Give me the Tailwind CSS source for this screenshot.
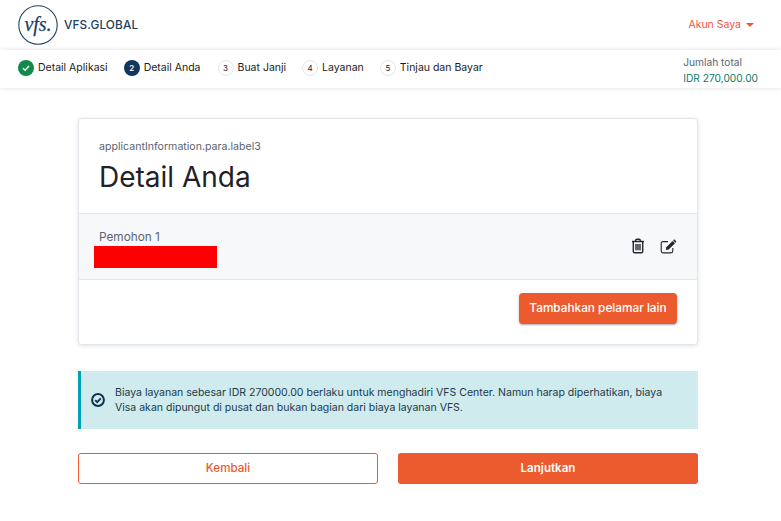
<!DOCTYPE html>
<html lang="en">
<head>
    <meta charset="UTF-8">
    <meta name="viewport" content="width=device-width, initial-scale=1.0">
    <title>VFS Global - Detail Anda</title>
    <script src="https://cdn.jsdelivr.net/npm/@tailwindcss/browser@4"></script>
</head>
<body class="bg-white font-['Inter',sans-serif] text-[#1c1c1e] w-[781px] h-[521px] overflow-hidden">
    <!-- Header -->
    <header class="h-[50px] flex items-center justify-between pl-[18px] pr-[27px] bg-white">
        <div class="flex items-center gap-[6px]">
            <svg width="40" height="40" viewBox="0 0 40 40" fill="none">
                <circle cx="20" cy="20" r="19.2" stroke="#1c3f60" stroke-width="1.1"/>
                <text x="20" y="26" text-anchor="middle" font-family="Liberation Serif" font-style="italic" font-size="20" fill="#1c3f60" stroke="#1c3f60" stroke-width="0.25">vfs.</text>
            </svg>
            <span class="text-[11.8px] font-medium tracking-[0.12px] mt-[1px] text-[#1c3f60]">VFS.GLOBAL</span>
        </div>
        <div class="flex items-center gap-[5px] text-[10.5px] text-[#f0523d]">
            <span>Akun Saya</span>
            <span class="w-0 h-0 border-x-[4px] border-x-transparent border-t-[4px] border-t-[#ec5b2e]"></span>
        </div>
    </header>

    <!-- Stepper -->
    <div class="h-[38px] flex items-center justify-between pl-[18px] pr-[23px] bg-white shadow-[0_0_5px_rgba(0,0,0,0.13)]">
        <div class="flex items-center text-[10.5px] -mt-[3px]">
            <div class="flex items-center gap-[4px] mr-[16px]">
                <span class="w-4 h-4 rounded-full bg-[#0f8a4b] flex items-center justify-center">
                    <svg width="10" height="10" viewBox="0 0 10 10" fill="none"><path d="M2 5.2l2.1 2L8 3" stroke="#fff" stroke-width="1.5"/></svg>
                </span>
                <span>Detail Aplikasi</span>
            </div>
            <div class="flex items-center gap-[4px] mr-[17px]">
                <span class="w-4 h-4 rounded-full bg-[#12355b] text-white text-[8px] font-semibold flex items-center justify-center">2</span>
                <span>Detail Anda</span>
            </div>
            <div class="flex items-center gap-[4px] mr-[16px]">
                <span class="w-4 h-4 rounded-full border border-[#e4e6ea] text-[8px] flex items-center justify-center">3</span>
                <span>Buat Janji</span>
            </div>
            <div class="flex items-center gap-[4px] mr-[16px]">
                <span class="w-4 h-4 rounded-full border border-[#e4e6ea] text-[8px] flex items-center justify-center">4</span>
                <span>Layanan</span>
            </div>
            <div class="flex items-center gap-[4px]">
                <span class="w-4 h-4 rounded-full border border-[#e4e6ea] text-[8px] flex items-center justify-center">5</span>
                <span>Tinjau dan Bayar</span>
            </div>
        </div>
        <div class="text-[10.2px] leading-[16px] mt-[1px]">
            <div class="text-[#5a6472]">Jumlah total</div>
            <div class="text-[#0b7d6a]">IDR 270,000.00</div>
        </div>
    </div>

    <main class="w-[620px] ml-[78px] mt-[30px]">
        <!-- Card -->
        <div class="h-[227px] bg-white rounded-[4px] border border-[#e3e7ec] shadow-[0_1px_4px_rgba(40,60,90,0.14)] flex flex-col">
            <div class="h-[95px] px-5 pt-[21px] border-b border-[#e3e7ec]">
                <div class="text-[10.6px] leading-[14px] text-[#5a6472]">applicantInformation.para.label3</div>
                <h1 class="text-[28px] leading-[34px] mt-[6px] text-[#1f2226]">Detail Anda</h1>
            </div>
            <div class="h-[66px] bg-[#f7f8fa] border-b border-[#e3e7ec] pl-5 pr-[20px] flex items-start justify-between">
                <div class="pt-4">
                    <div class="text-[11.8px] leading-[14px] text-[#5a6472]">Pemohon 1</div>
                    <div class="w-[123px] h-[22px] bg-[#ff0000] -ml-[5px] mt-[2px]"></div>
                </div>
                <div class="flex items-center gap-[15px] pt-[24px]">
                    <svg width="14" height="16" viewBox="0 0 14 16" fill="none" stroke="#23272c" stroke-width="1.4">
                        <path d="M1 3.5h12M4.8 3.3V2.2c0-.6.4-1 1-1h2.4c.6 0 1 .4 1 1v1.1M2.3 3.5v10c0 .8.5 1.3 1.3 1.3h6.8c.8 0 1.3-.5 1.3-1.3v-10M5 6v6.3M7 6v6.3M9 6v6.3"/>
                    </svg>
                    <svg width="17" height="15" viewBox="0 0 17 15" fill="none">
                        <path d="M8 2.6H3c-1.1 0-1.8.7-1.8 1.8v7.7c0 1.1.7 1.8 1.8 1.8h8c1.1 0 1.8-.7 1.8-1.8V9" stroke="#23272c" stroke-width="1.1"/>
                        <path d="M6.3 8.2L12.6 1.9l2.4 2.4L8.7 10.6l-2.9.4z" fill="#23272c"/>
                        <path d="M13.6.9c.4-.4 1-.4 1.3 0l1.1 1.1c.4.4.4.9 0 1.3l-.5.5-2.4-2.4z" fill="#23272c"/>
                    </svg>
                </div>
            </div>
            <div class="flex-1 flex justify-end items-start pr-5 pt-[13px]">
                <button class="w-[158px] h-[31px] rounded-[4px] bg-[#ec5b2e] text-white text-[11.8px] font-medium shadow-[0_1px_2px_rgba(0,0,0,0.35)]">Tambahkan pelamar lain</button>
            </div>
        </div>

        <!-- Notice -->
        <div class="h-[58px] mt-[26px] bg-[#d0ebee] border-l-[3px] border-[#00a3b4] flex items-center pl-[10px] pr-4 gap-[10px]">
            <svg class="shrink-0" width="14" height="14" viewBox="0 0 14 14" fill="none" stroke="#10324f">
                <circle cx="7" cy="7" r="5.9" stroke-width="2"/>
                <path d="M4.2 7.1l2 2 3.6-3.7" stroke-width="1.8"/>
            </svg>
            <p class="text-[10.52px] leading-[15px] text-[#1c3a4a]">Biaya layanan sebesar IDR 270000.00 berlaku untuk menghadiri VFS Center. Namun harap diperhatikan, biaya Visa akan dipungut di pusat dan bukan bagian dari biaya layanan VFS.</p>
        </div>

        <!-- Actions -->
        <div class="grid grid-cols-2 gap-5 mt-[24px]">
            <button class="h-[31px] rounded-[3px] border border-[#ec5b2e] bg-white text-[#ec5b2e] text-[11.6px] font-medium">Kembali</button>
            <button class="h-[31px] rounded-[3px] bg-[#ec5b2e] text-white text-[11.6px] font-semibold">Lanjutkan</button>
        </div>
    </main>
</body>
</html>
